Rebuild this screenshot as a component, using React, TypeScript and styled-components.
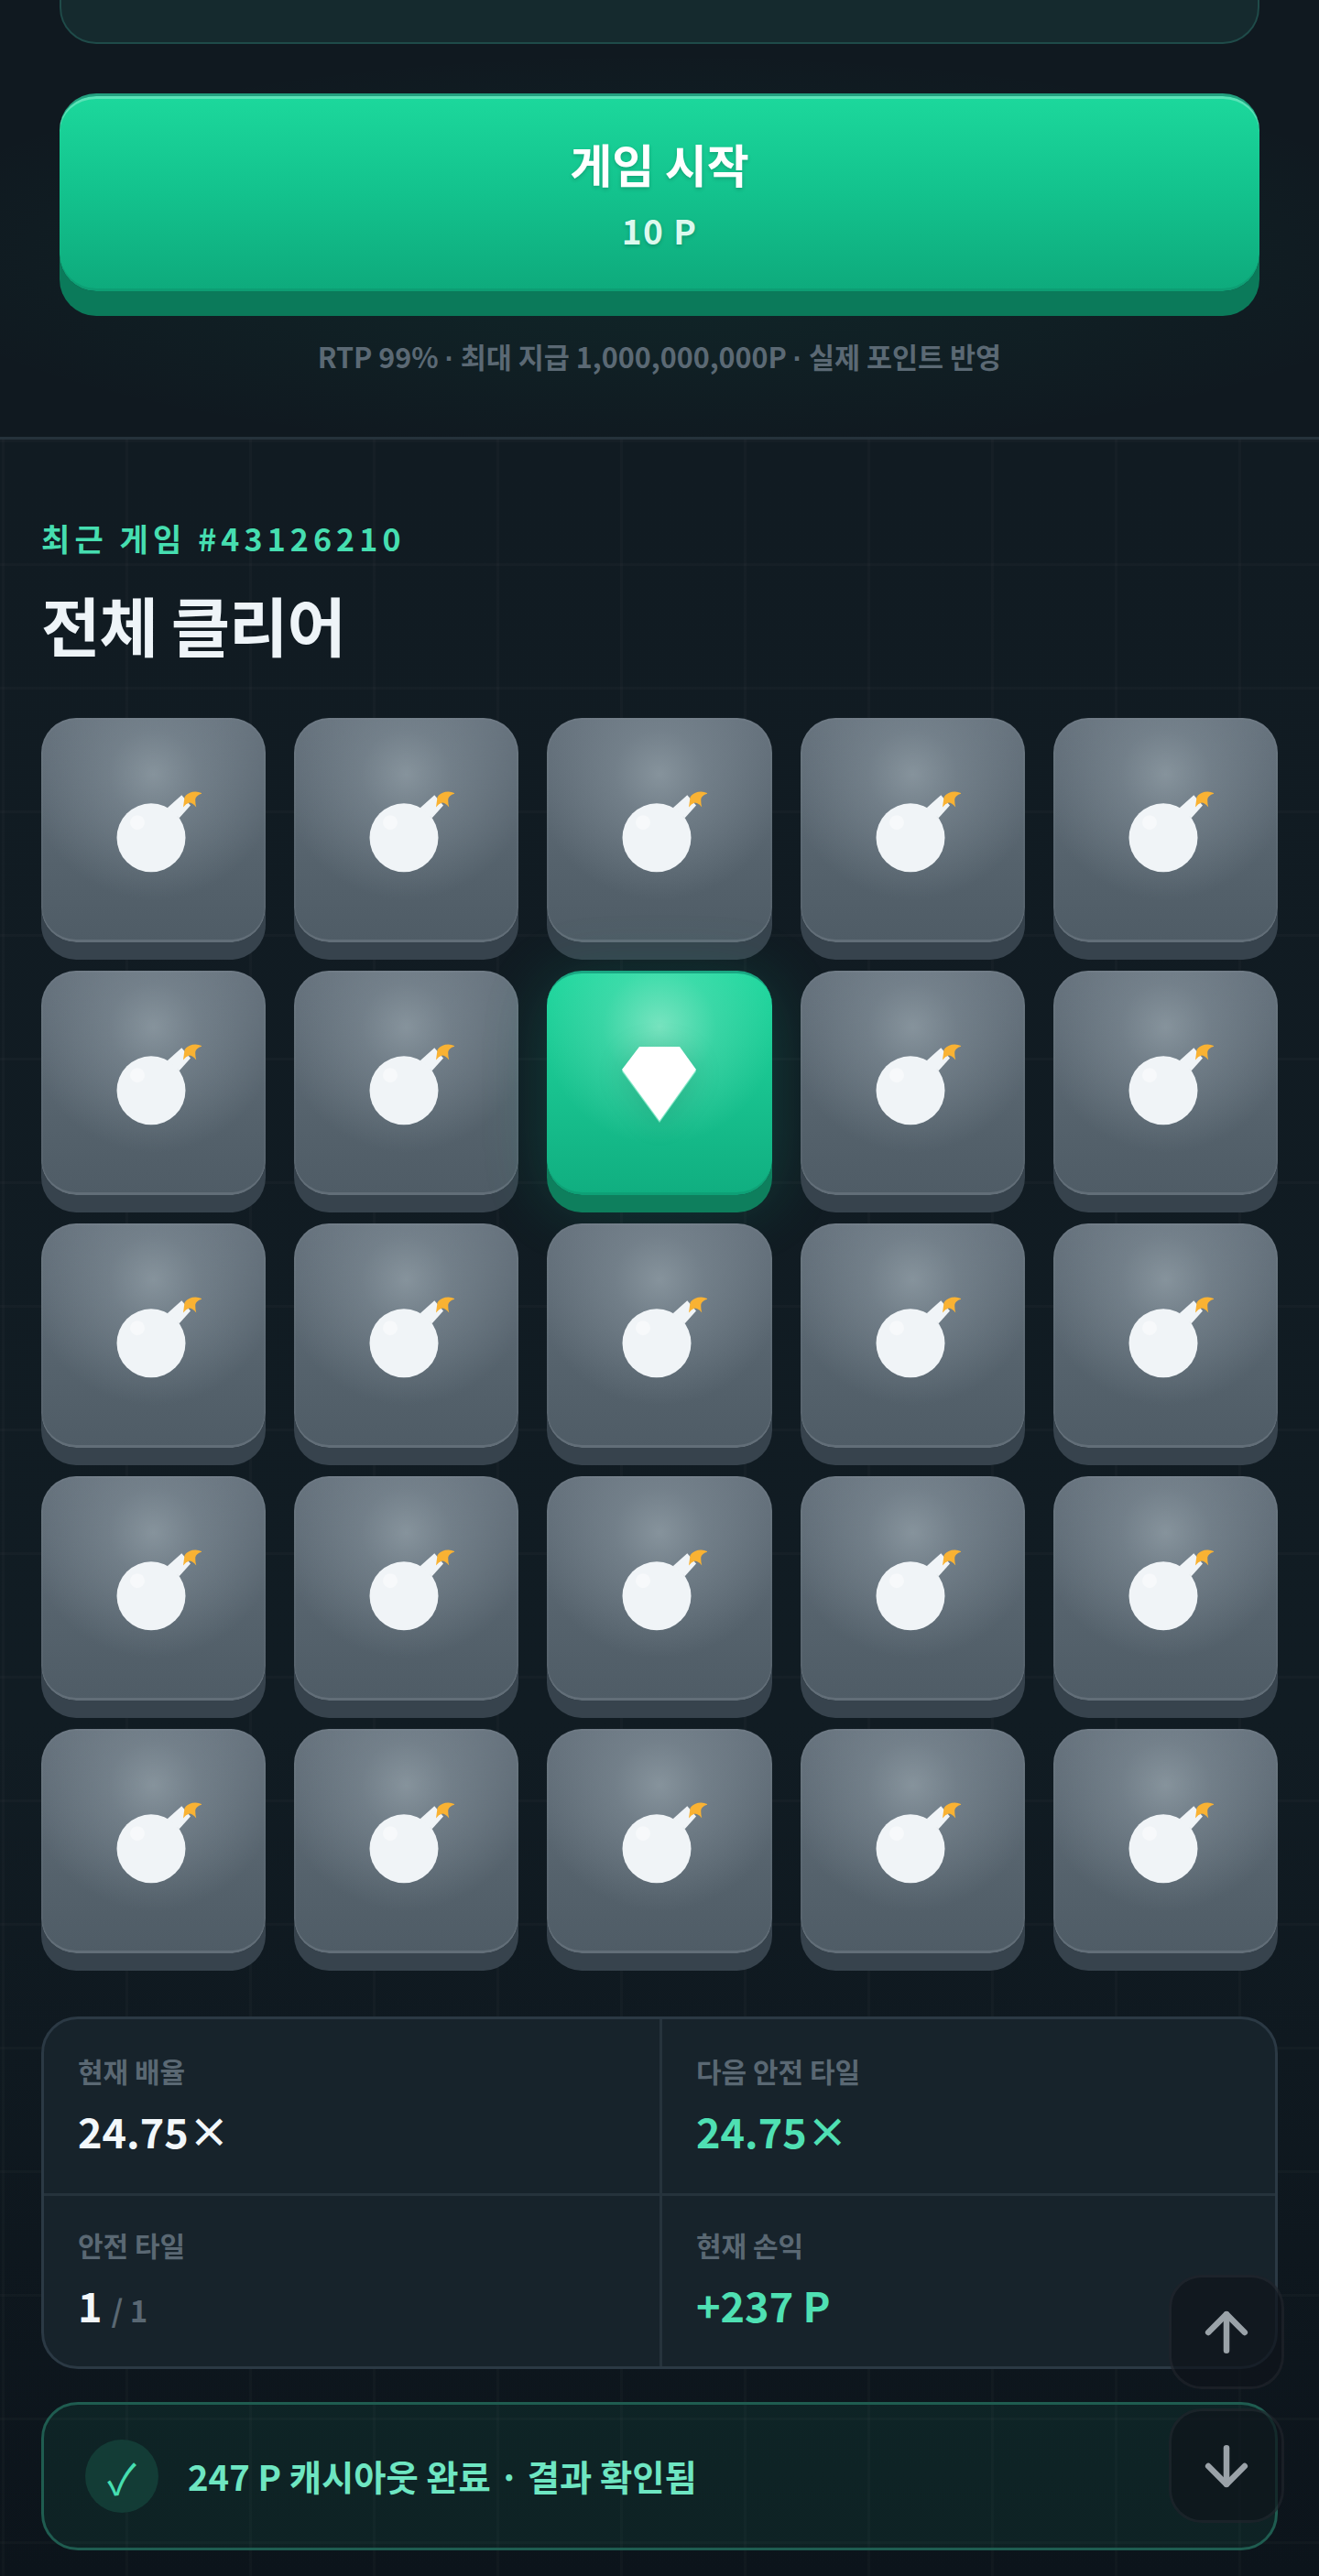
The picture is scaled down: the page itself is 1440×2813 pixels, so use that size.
import React from "react";
import styled, { createGlobalStyle } from "styled-components";
import { ArrowUp, ArrowDown } from "lucide-react";

const Global = createGlobalStyle`
  html, body { margin: 0; padding: 0; background: #101920; }
  body { font-family: "Noto Sans CJK KR", "Noto Sans", sans-serif; overflow-x: hidden; }
  #root { height: 2813px; overflow: hidden; }
  * { box-sizing: border-box; }
`;

const TopSection = styled.section`
  display: flow-root;
  height: 480px;
  padding: 0 65px;
  border-bottom: 3px solid #25323b;
  background:
    radial-gradient(ellipse 60% 46% at 50% 58%, rgba(20, 190, 140, 0.09), rgba(20, 190, 140, 0) 100%),
    #101920;
`;

const PreviousCard = styled.div`
  height: 88px;
  margin-top: -40px;
  border: 2px solid #1f4b49;
  border-radius: 40px;
  background: #152a2e;
`;

const StartButton = styled.button`
  display: flex;
  flex-direction: column;
  align-items: center;
  width: 100%;
  height: 216px;
  margin-top: 54px;
  padding: 39px 0 0;
  border: none;
  border-top: 3px solid #23a07f;
  border-radius: 40px;
  font-family: inherit;
  color: #fff;
  background: linear-gradient(180deg, #1cd89c 0%, #13c28d 50%, #0eaa7c 100%);
  box-shadow: inset 0 3px 0 rgba(255, 255, 255, 0.28), inset 0 -3px 0 rgba(0, 0, 0, 0.07), 0 27px 0 #0b7a5a;
`;

const StartTitle = styled.span`
  font-size: 50px;
  line-height: 68px;
  font-weight: 700;
  text-shadow: 0 2px 4px rgba(0, 0, 0, 0.18);
`;

const StartCost = styled.span`
  margin-top: 15px;
  font-size: 37px;
  line-height: 48px;
  font-weight: 700;
  letter-spacing: 1.5px;
  color: #dcf9ee;
  text-shadow: 0 2px 4px rgba(0, 0, 0, 0.18);
`;

const Hint = styled.p`
  margin: 49px 0 0;
  font-size: 30.5px;
  line-height: 44px;
  font-weight: 700;
  color: #5b6974;
  text-align: center;
`;

const Dot = styled.span`
  font-family: "Liberation Sans", sans-serif;
`;

const ResultSection = styled.section`
  height: 2333px;
  padding: 0 45px;
  background:
    linear-gradient(rgba(255, 255, 255, 0.018) 3px, transparent 3px) 0 0 / 135px 135px,
    linear-gradient(90deg, rgba(255, 255, 255, 0.018) 3px, transparent 3px) 2px 0 / 135px 135px,
    linear-gradient(180deg, #111b22 0%, #111c23 60%, #0c141b 100%);
`;

const Eyebrow = styled.div`
  padding-top: 84px;
  font-size: 34px;
  line-height: 48px;
  font-weight: 700;
  letter-spacing: 5.1px;
  color: #46deb0;
`;

const Title = styled.h1`
  margin: 20px 0 0;
  font-size: 70px;
  line-height: 100px;
  font-weight: 700;
  letter-spacing: -1px;
  color: #eef4f8;
`;

const Board = styled.div`
  display: grid;
  grid-template-columns: repeat(5, 1fr);
  gap: 31px;
  margin-top: 52px;
`;

const Tile = styled.div<{ $win?: boolean }>`
  display: flex;
  align-items: center;
  justify-content: center;
  height: 245px;
  border-radius: 38px;
  ${(p) =>
    p.$win
      ? `
    border-top: 3px solid #1aa682;
    background:
      radial-gradient(circle at 50% 24%, rgba(150, 235, 205, 0.75) 0%, rgba(120, 230, 195, 0.3) 28%, rgba(30, 215, 160, 0) 58%),
      linear-gradient(180deg, #22d89f 0%, #10ae80 100%);
    box-shadow: inset 0 -3px 0 rgba(0,0,0,0.08), 0 19px 0 #0e7f5d, 0 10px 70px rgba(20, 200, 150, 0.22);
  `
      : `
    background:
      radial-gradient(circle at 50% 25%, #86939c 0%, rgba(122, 135, 145, 0.7) 22%, rgba(100, 113, 124, 0) 62%),
      linear-gradient(180deg, #65717c 0%, #55626c 65%, #4f5c66 100%);
    box-shadow: inset 0 -3px 0 #626e78, inset 0 0 0 2px rgba(255,255,255,0.035), 0 19px 0 #37434d;
  `}
`;

const StatsPanel = styled.div`
  display: grid;
  grid-template-columns: 1fr 1fr;
  grid-auto-rows: 1fr;
  height: 385px;
  margin-top: 69px;
  border: 3px solid #2b3944;
  border-radius: 40px;
  background: #17232b;
  overflow: hidden;
`;

const Stat = styled.div<{ $right?: boolean; $bottom?: boolean }>`
  padding: ${(p) => (p.$bottom ? 31 : 34)}px 0 0 37px;
  ${(p) => p.$right && "border-left: 3px solid #26333c;"}
  ${(p) => p.$bottom && "border-top: 3px solid #26333c;"}
`;

const StatLabel = styled.div`
  font-size: 30px;
  line-height: 44px;
  font-weight: 700;
  color: #5a6873;
`;

const StatValue = styled.div<{ $accent?: boolean }>`
  margin-top: 12px;
  font-size: 45px;
  line-height: 64px;
  font-weight: 700;
  color: ${(p) => (p.$accent ? "#4fe0b3" : "#f2f7fa")};
`;

const StatTotal = styled.span`
  margin-left: 10px;
  font-size: 33px;
  font-weight: 700;
  color: #5a6873;
`;

const Banner = styled.div`
  display: flex;
  align-items: center;
  gap: 32px;
  height: 162px;
  margin-top: 36px;
  padding-left: 45px;
  border: 3px solid #1f5c50;
  border-radius: 40px;
  background: rgba(32, 210, 155, 0.08);
`;

const CheckBadge = styled.span`
  display: flex;
  align-items: center;
  justify-content: center;
  width: 80px;
  height: 80px;
  border-radius: 50%;
  background: #133c36;
  color: #46deb0;
  font-size: 46px;
  line-height: 1;
`;

const BannerText = styled.span`
  font-size: 38.3px;
  line-height: 56px;
  font-weight: 700;
  color: #6ee6c2;
`;

const ScrollButton = styled.button<{ $top: number }>`
  position: fixed;
  top: ${(p) => p.$top}px;
  right: 38px;
  display: flex;
  align-items: center;
  justify-content: center;
  width: 126px;
  height: 125px;
  padding: 0;
  border: 3px solid rgba(255, 255, 255, 0.05);
  border-radius: 36px;
  background: rgba(15, 19, 27, 0.68);
  color: #9aa2a8;
`;

const Bomb = () => (
  <svg width="105" height="100" viewBox="15 25.5 105 100">
    <path d="M82.7 50.7 L98.3 36.7 L108 48 L95.7 61.7 Z" fill="#f0f4f7" />
    <circle cx="65" cy="83.3" r="37.5" fill="#f0f4f7" />
    <path d="M100 50 L101.5 39 Q104 35 110 33.3 Q116 32 120.7 35 Q114 37 113.3 41 Q113 46 114.3 50 Q110 45 106.7 45 Q103 46 100 50 Z" fill="#f9b233" />
    <circle cx="50" cy="66.7" r="8" fill="#ffffff" opacity="0.45" />
  </svg>
);

const Gem = () => (
  <svg width="82" height="82" viewBox="0 0 82 82" style={{ filter: "drop-shadow(0 2px 0 rgba(150,240,210,.8)) drop-shadow(0 4px 16px rgba(0,0,0,.12))" }}>
    <path d="M19 0 H63 L81 25 L41 81 L0 25 Z" fill="#ffffff" />
  </svg>
);

const stats = [
  { label: "현재 배율", value: "24.75×" },
  { label: "다음 안전 타일", value: "24.75×", accent: true, right: true },
  { label: "안전 타일", value: "1", total: "/ 1", bottom: true },
  { label: "현재 손익", value: "+237 P", accent: true, right: true, bottom: true },
];

export default function App() {
  return (
    <>
      <Global />
      <TopSection>
        <PreviousCard />
        <StartButton>
          <StartTitle>게임 시작</StartTitle>
          <StartCost>10 P</StartCost>
        </StartButton>
        <Hint>
          RTP 99% <Dot>·</Dot> 최대 지급 1,000,000,000P <Dot>·</Dot> 실제 포인트 반영
        </Hint>
      </TopSection>
      <ResultSection>
        <Eyebrow>최근 게임 #43126210</Eyebrow>
        <Title>전체 클리어</Title>
        <Board>
          {Array.from({ length: 25 }, (_, i) => (
            <Tile key={i} $win={i === 7}>
              {i === 7 ? <Gem /> : <Bomb />}
            </Tile>
          ))}
        </Board>
        <StatsPanel>
          {stats.map((s) => (
            <Stat key={s.label} $right={s.right} $bottom={s.bottom}>
              <StatLabel>{s.label}</StatLabel>
              <StatValue $accent={s.accent}>
                {s.value}
                {s.total && <StatTotal>{s.total}</StatTotal>}
              </StatValue>
            </Stat>
          ))}
        </StatsPanel>
        <Banner>
          <CheckBadge>✓</CheckBadge>
          <BannerText>247 P 캐시아웃 완료 · 결과 확인됨</BannerText>
        </Banner>
      </ResultSection>
      <ScrollButton $top={2484} aria-label="위로">
        <ArrowUp size={68} strokeWidth={2.3} />
      </ScrollButton>
      <ScrollButton $top={2630} aria-label="아래로">
        <ArrowDown size={68} strokeWidth={2.3} />
      </ScrollButton>
    </>
  );
}
